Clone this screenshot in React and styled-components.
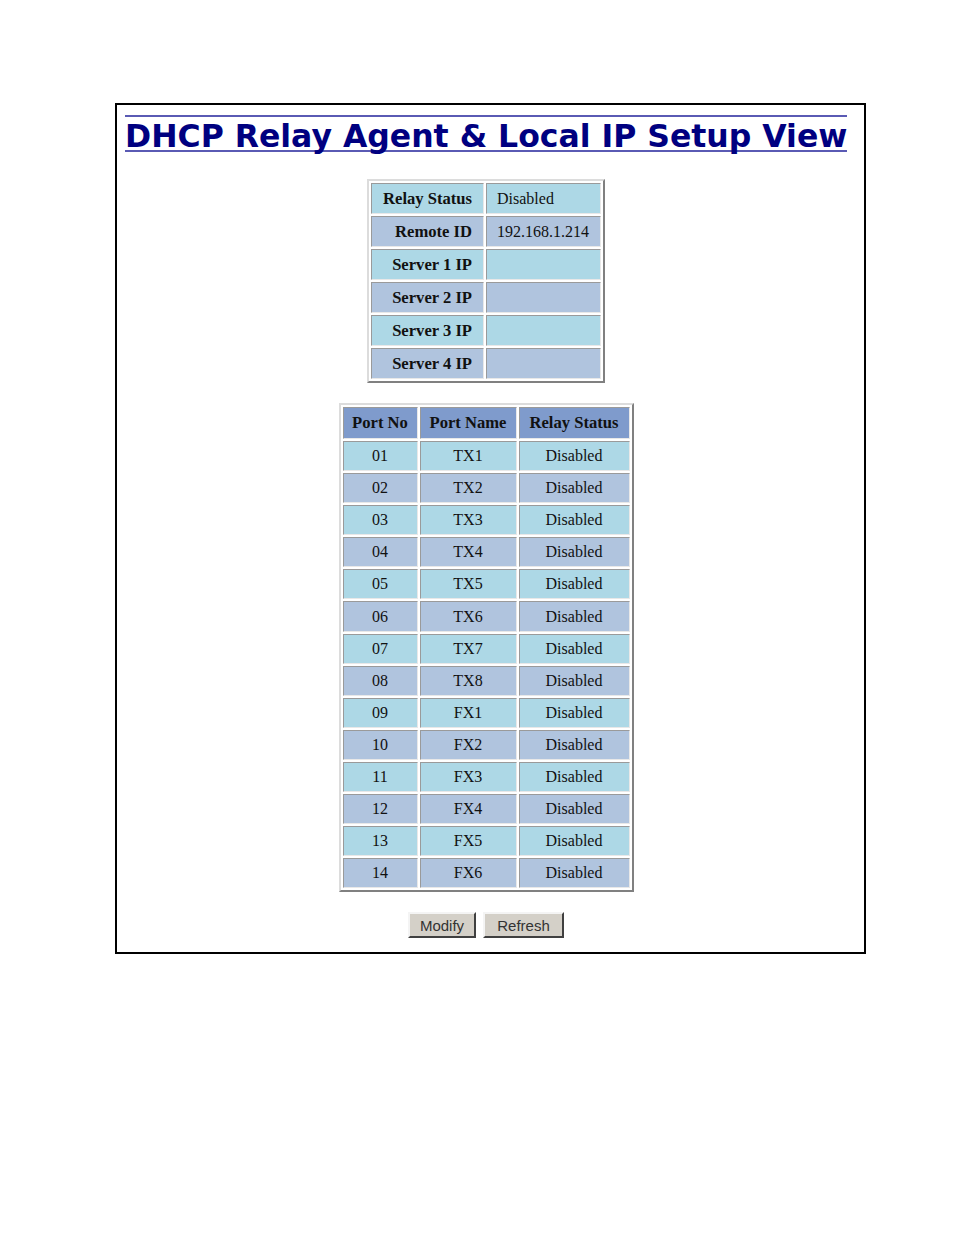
import React from "react";
import styled, { createGlobalStyle } from "styled-components";

const Global = createGlobalStyle`
  html, body { margin: 0; padding: 0; background: #fff; }
  body { font-family: "Liberation Serif", "Times New Roman", serif; color: #000; }
`;

const Page = styled.div`
  padding: 103px 0 0 115px;
  width: 954px;
  height: 1235px;
  box-sizing: border-box;
`;

const Frame = styled.div`
  width: 751px;
  height: 851px;
  box-sizing: border-box;
  border: 2px solid #000;
  padding: 10px 17px 0 8px;
  display: flex;
  flex-direction: column;
  align-items: center;
`;

const TitleRow = styled.div`
  align-self: flex-start;
  display: flex;
`;

const Title = styled.h1`
  margin: 0;
  font-family: "DejaVu Sans", Verdana, sans-serif;
  font-weight: bold;
  font-size: 31.5px;
  line-height: 27px;
  height: 27px;
  box-sizing: content-box;
  color: #000080;
  border-top: 2px solid #5a5ab4;
  border-bottom: 2px solid #5a5ab4;
  padding: 6px 0 0 0;
  white-space: nowrap;
`;

const Table = styled.table`
  border-collapse: separate;
  border-spacing: 2px;
  border: 2px solid;
  border-color: #dcdcdc #808080 #808080 #dcdcdc;
  margin-top: ${(p) => p.$top}px;
`;

const Cell = styled.td`
  border: 1px solid;
  border-color: #9a9a9a #e8e8e8 #e8e8e8 #9a9a9a;
  background: ${(p) => p.$bg};
  font-family: "Liberation Serif", "Times New Roman", serif;
  font-size: ${(p) => (p.$bold ? "16.6px" : "16px")};
  font-weight: ${(p) => (p.$bold ? "bold" : "normal")};
  text-align: ${(p) => p.$align || "center"};
  height: ${(p) => p.$h}px;
  width: ${(p) => p.$w}px;
  padding: 0 ${(p) => p.$px || 6}px;
  box-sizing: border-box;
  color: #111;
  white-space: nowrap;
`;

const Buttons = styled.div`
  display: flex;
  align-items: flex-start;
  gap: 7px;
  margin-top: 20px;
`;

const Button = styled.button`
  font-family: "Liberation Sans", Arial, sans-serif;
  font-size: 15px;
  color: #333;
  background: #d4d0c8;
  border: 2px solid;
  border-color: #f4f4f4 #404040 #404040 #f4f4f4;
  height: 26px;
  width: ${(p) => p.$w}px;
  padding: 0;
  box-sizing: border-box;
`;

const BLUE = "#add8e6";
const STEEL = "#b0c4de";
const HEAD = "#7f9bcc";

const relayRows = [
  ["Relay Status", "Disabled"],
  ["Remote ID", "192.168.1.214"],
  ["Server 1 IP", ""],
  ["Server 2 IP", ""],
  ["Server 3 IP", ""],
  ["Server 4 IP", ""],
];

const ports = [
  ["01", "TX1"], ["02", "TX2"], ["03", "TX3"], ["04", "TX4"],
  ["05", "TX5"], ["06", "TX6"], ["07", "TX7"], ["08", "TX8"],
  ["09", "FX1"], ["10", "FX2"], ["11", "FX3"], ["12", "FX4"],
  ["13", "FX5"], ["14", "FX6"],
];

export default function App() {
  return (
    <>
      <Global />
      <Page>
        <Frame>
          <TitleRow>
            <Title>DHCP Relay Agent &amp; Local IP Setup View</Title>
          </TitleRow>
          <Table $top={27}>
            <tbody>
              {relayRows.map(([k, v], i) => (
                <tr key={k}>
                  <Cell $bg={i % 2 ? STEEL : BLUE} $bold $align="right" $h={31} $w={113} $px={11}>
                    {k}
                  </Cell>
                  <Cell $bg={i % 2 ? STEEL : BLUE} $align="left" $h={31} $w={115} $px={10}>
                    {v}
                  </Cell>
                </tr>
              ))}
            </tbody>
          </Table>
          <Table $top={20}>
            <tbody>
              <tr>
                <Cell $bg={HEAD} $bold $h={32} $w={75}>Port No</Cell>
                <Cell $bg={HEAD} $bold $h={32} $w={97}>Port Name</Cell>
                <Cell $bg={HEAD} $bold $h={32} $w={111}>Relay Status</Cell>
              </tr>
              {ports.map(([n, name], i) => (
                <tr key={n}>
                  <Cell $bg={i % 2 ? STEEL : BLUE} $h={30.1} $w={75}>{n}</Cell>
                  <Cell $bg={i % 2 ? STEEL : BLUE} $h={30.1} $w={97}>{name}</Cell>
                  <Cell $bg={i % 2 ? STEEL : BLUE} $h={30.1} $w={111}>Disabled</Cell>
                </tr>
              ))}
            </tbody>
          </Table>
          <Buttons>
            <Button $w={68}>Modify</Button>
            <Button $w={81}>Refresh</Button>
          </Buttons>
        </Frame>
      </Page>
    </>
  );
}
